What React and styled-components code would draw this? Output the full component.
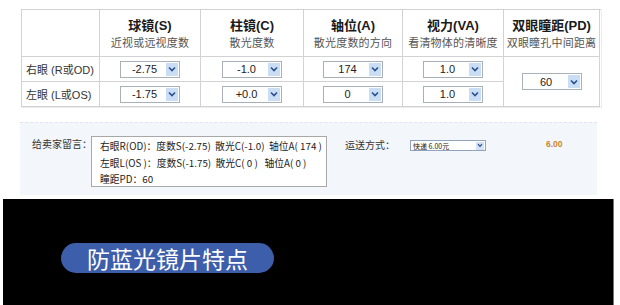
import React from "react";
import styled, { createGlobalStyle } from "styled-components";

const Global = createGlobalStyle`
  html, body { margin: 0; padding: 0; background: #fff; }
  body { font-family: "Liberation Sans", "Noto Sans CJK SC", sans-serif; color: #222; }
  #root { width: 620px; height: 305px; overflow: hidden; }
`;

const Page = styled.div`
  width: 620px;
  height: 305px;
  display: flex;
  flex-direction: column;
  background: #fff;
`;

const Table = styled.div`
  margin: 9px 0 0 21px;
  display: grid;
  grid-template-columns: 78px 101px 103px 99px 101px 96px;
  grid-template-rows: 47px 25px 25px;
  width: 579px;
  border-top: 1px solid #d2d2d2;
  border-left: 1px solid #d2d2d2;
  box-shadow: 1px 1px 0 #ececec;
`;

const Cell = styled.div`
  border-right: 1px solid #d2d2d2;
  border-bottom: 1px solid #d2d2d2;
  display: flex;
  align-items: center;
  justify-content: ${(p) => (p.$left ? "flex-start" : "center")};
  padding-left: ${(p) => (p.$left ? "4px" : "0")};
  grid-row: ${(p) => p.$rows || "auto"};
  font-size: 11px;
  white-space: nowrap;
  color: #333;
  font-family: "Liberation Sans", "Noto Sans CJK SC", sans-serif;
`;

const HeadCell = styled(Cell)`
  flex-direction: column;
  justify-content: flex-start;
  padding-top: 8px;
`;

const HeadTitle = styled.div`
  font-size: 13px;
  line-height: 16px;
  font-weight: bold;
  color: #1a1a1a;
  font-family: "Liberation Sans", "Noto Sans CJK SC", sans-serif;
`;

const HeadSub = styled.div`
  font-size: 11px;
  line-height: 17px;
  color: #555;
  letter-spacing: 0.2px;
  font-family: "Noto Sans CJK SC", sans-serif;
`;

const Select = styled.div`
  width: 58px;
  height: 15px;
  border: 1px solid #a9b0b8;
  background: #fff;
  display: flex;
  align-items: center;
  font-size: 11px;
  color: #222;
`;

const SelectText = styled.span`
  flex: 1;
  text-align: center;
  padding-left: 2px;
`;

const ArrowBox = styled.span`
  width: 12px;
  height: 13px;
  margin-right: 1px;
  background: #c9def4;
  display: flex;
  align-items: center;
  justify-content: center;
`;

const Chevron = () => (
  <svg width="8" height="6" viewBox="0 0 8 6">
    <path d="M1 1.5 L4 4.5 L7 1.5" fill="none" stroke="#2a4f8f" strokeWidth="1.6" />
  </svg>
);

const Sel = ({ v }) => (
  <Select>
    <SelectText>{v}</SelectText>
    <ArrowBox>
      <Chevron />
    </ArrowBox>
  </Select>
);

const Panel = styled.div`
  margin: 15px 0 0 20px;
  width: 577px;
  height: 73px;
  background: #f3f7fc;
  border-top: 1px dashed #dfe5ee;
  box-sizing: border-box;
  display: flex;
  align-items: flex-start;
  padding: 13px 0 0 12px;
`;

const Label = styled.div`
  font-family: "Noto Sans CJK SC", sans-serif;
  font-size: 10px;
  line-height: 14px;
  color: #333;
  margin-top: 1px;
  width: 59px;
  white-space: nowrap;
`;

const MsgBox = styled.div`
  width: 236px;
  height: 51px;
  box-sizing: border-box;
  border: 1px solid #a8a8a8;
  background: #fff;
  padding: 1px 0 0 8px;
  font-family: "Noto Sans CJK SC", sans-serif;
  font-size: 9.8px;
  line-height: 16.5px;
  color: #222;
  white-space: pre;
  overflow: hidden;
`;

const Ship = styled.div`
  margin-left: 18px;
  margin-top: 1px;
  display: flex;
  align-items: flex-start;
`;

const ShipLabel = styled(Label)`
  width: 65px;
`;

const SmallSelect = styled.div`
  margin-top: 3px;
  width: 76px;
  height: 11px;
  border: 1px solid #8fa3bf;
  background: #fff;
  display: flex;
  align-items: center;
  font-family: "Noto Sans CJK SC", sans-serif;
  font-size: 7px;
  color: #222;
  padding-left: 2px;
  box-sizing: border-box;
`;

const SmallArrow = styled.span`
  margin-left: auto;
  width: 8px;
  height: 8px;
  background: #d3e2f3;
  display: flex;
  align-items: center;
  justify-content: center;
  margin-right: 1px;
`;

const Price = styled.div`
  margin-left: 60px;
  margin-top: 2px;
  font-size: 8.5px;
  font-weight: bold;
  color: #c9852f;
  font-family: "Liberation Sans", sans-serif;
`;

const Dark = styled.div`
  margin: 4px 0 0 3px;
  width: 611px;
  flex: 1;
  background: #000;
  border-right: 1px solid #777;
  padding: 44px 0 0 58px;
  box-sizing: border-box;
`;

const Pill = styled.div`
  width: 213px;
  height: 30px;
  border-radius: 15px;
  background: #3d5eab;
  color: #fff;
  display: flex;
  align-items: center;
  justify-content: center;
  font-family: "Noto Sans CJK SC", sans-serif;
  font-size: 23px;
  line-height: 30px;
`;

const heads = [
  ["球镜(S)", "近视或远视度数"],
  ["柱镜(C)", "散光度数"],
  ["轴位(A)", "散光度数的方向"],
  ["视力(VA)", "看清物体的清晰度"],
  ["双眼瞳距(PD)", "双眼瞳孔中间距离"],
];

export default function App() {
  return (
    <>
      <Global />
      <Page>
        <Table>
          <Cell />
          {heads.map(([t, s]) => (
            <HeadCell key={t}>
              <HeadTitle>{t}</HeadTitle>
              <HeadSub>{s}</HeadSub>
            </HeadCell>
          ))}
          <Cell $left>右眼 (R或OD)</Cell>
          <Cell><Sel v="-2.75" /></Cell>
          <Cell><Sel v="-1.0" /></Cell>
          <Cell><Sel v="174" /></Cell>
          <Cell><Sel v="1.0" /></Cell>
          <Cell $rows="span 2"><Sel v="60" /></Cell>
          <Cell $left>左眼 (L或OS)</Cell>
          <Cell><Sel v="-1.75" /></Cell>
          <Cell><Sel v="+0.0" /></Cell>
          <Cell><Sel v="0" /></Cell>
          <Cell><Sel v="1.0" /></Cell>
        </Table>
        <Panel>
          <Label>给卖家留言：</Label>
          <MsgBox>
            {"右眼R(OD)：度数S(-2.75)  散光C(-1.0)  轴位A( 174 )\n左眼L(OS )：度数S(-1.75)  散光C( 0 )   轴位A( 0 )\n瞳距PD：60"}
          </MsgBox>
          <Ship>
            <ShipLabel>运送方式：</ShipLabel>
            <SmallSelect>
              快递 6.00元
              <SmallArrow>
                <svg width="6" height="5" viewBox="0 0 6 5">
                  <path d="M1 1.2 L3 3.4 L5 1.2" fill="none" stroke="#2a4f8f" strokeWidth="1.2" />
                </svg>
              </SmallArrow>
            </SmallSelect>
            <Price>6.00</Price>
          </Ship>
        </Panel>
        <Dark>
          <Pill>防蓝光镜片特点</Pill>
        </Dark>
      </Page>
    </>
  );
}
